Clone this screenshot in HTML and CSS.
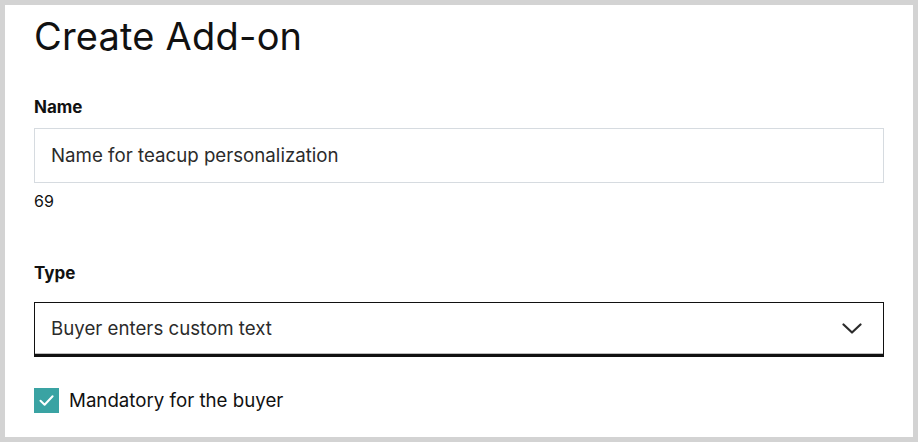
FILE: index.html
```html
<!DOCTYPE html>
<html>
<head>
<meta charset="utf-8">
<link rel="stylesheet" href="styles.css">
</head>
<body>
<div class="card">
  <h1 class="title">Create Add-on</h1>
  <div class="field field-name">
    <label class="label">Name</label>
    <div class="input">Name for teacup personalization</div>
    <div class="counter">69</div>
  </div>
  <div class="field field-type">
    <label class="label">Type</label>
    <div class="select">
      <span>Buyer enters custom text</span>
      <svg class="chevron" width="20" height="12" viewBox="0 0 20 12"><path d="M1.5 1.5 L10 9.5 L18.5 1.5" fill="none" stroke="#2b2b2b" stroke-width="2.2" stroke-linecap="round" stroke-linejoin="round"/></svg>
    </div>
  </div>
  <div class="check-row">
    <span class="checkbox"><svg width="25" height="25" viewBox="0 0 25 25"><path d="M6.5 12.8 L10.6 16.8 L18.6 8.2" fill="none" stroke="#fff" stroke-width="2" stroke-linecap="round" stroke-linejoin="round"/></svg></span>
    <span class="check-label">Mandatory for the buyer</span>
  </div>
</div>
</body>
</html>
```
FILE: styles.css
```css
html, body {
  margin: 0;
  padding: 0;
}
body {
  background: #d3d3d3;
  padding: 5px;
  width: 918px;
  height: 442px;
  box-sizing: border-box;
  font-family: Inter, "Noto Sans", sans-serif;
  color: #111;
}
.card {
  background: #fff;
  height: 432px;
  padding: 8px 29px 0 29px;
  box-sizing: border-box;
}
.title {
  margin: 0;
  font-size: 38px;
  font-weight: 400;
  line-height: 46px;
  letter-spacing: 0.2px;
}
.field-name {
  margin-top: 37px;
}
.label {
  display: block;
  font-size: 17px;
  font-weight: 700;
  line-height: 22px;
}
.input {
  margin-top: 10px;
  height: 55px;
  border: 1px solid #d6dbe0;
  box-sizing: border-box;
  padding: 0 16px;
  display: flex;
  align-items: center;
  font-size: 18.7px;
  color: #2b2b2b;
}
.counter {
  font-size: 16px;
  line-height: 20px;
  margin-top: 8px;
}
.field-type {
  margin-top: 51px;
}
.select {
  margin-top: 18px;
  height: 55px;
  border: 1px solid #111;
  border-bottom: 3px solid #111;
  box-shadow: inset 0 -1px 0 #bdbdbd;
  box-sizing: border-box;
  padding: 0 21px 0 16px;
  display: flex;
  align-items: center;
  justify-content: space-between;
  font-size: 18.7px;
  color: #2b2b2b;
}
.chevron {
  display: block;
}
.check-row {
  margin-top: 31px;
  display: flex;
  align-items: center;
  gap: 10px;
}
.checkbox {
  width: 25px;
  height: 25px;
  background: #3aa3a3;
  display: block;
}
.checkbox svg {
  display: block;
}
.check-label {
  font-size: 18.7px;
  color: #111;
}
```
